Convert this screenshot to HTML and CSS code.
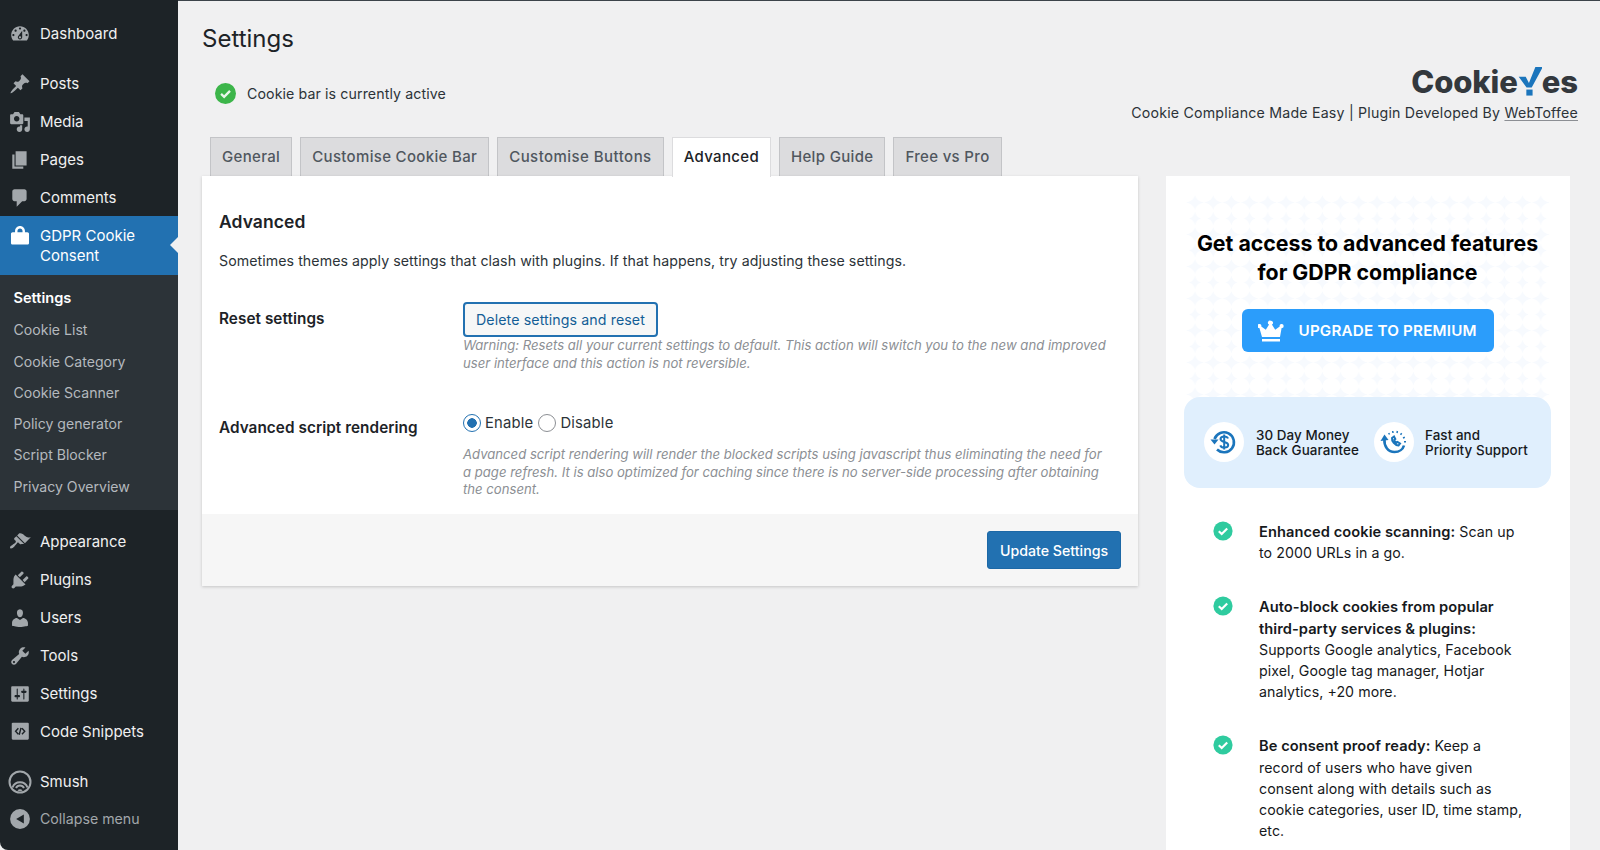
FILE: index.html
```html
<!DOCTYPE html>
<html lang="en">
<head>
<meta charset="utf-8">
<title>Settings</title>
<link rel="stylesheet" href="styles.css">
</head>
<body>
<aside class="sidebar">
  <nav>
    <ul class="menu menu-first">
      <li class="item"><svg class="ico" viewBox="0 0 20 20"><path d="M3.76 16h12.48c1.1-1.37 1.76-3.11 1.76-5 0-4.42-3.58-8-8-8s-8 3.58-8 8c0 1.89.66 3.63 1.76 5zM10 4c.55 0 1 .45 1 1s-.45 1-1 1-1-.45-1-1 .45-1 1-1zM6 6c.55 0 1 .45 1 1s-.45 1-1 1-1-.45-1-1 .45-1 1-1zm8 0c.55 0 1 .45 1 1s-.45 1-1 1-1-.45-1-1 .45-1 1-1zm-5.37 5.55L12 7v6c0 1.1-.9 2-2 2s-2-.9-2-2c0-.57.24-1.08.63-1.45zM4 10c.55 0 1 .45 1 1s-.45 1-1 1-1-.45-1-1 .45-1 1-1zm12 0c.55 0 1 .45 1 1s-.45 1-1 1-1-.45-1-1 .45-1 1-1zm-5 3c0-.55-.45-1-1-1s-1 .45-1 1 .45 1 1 1 1-.45 1-1z" fill-rule="evenodd"/></svg><span>Dashboard</span></li>
    </ul>
    <ul class="menu">
      <li class="item"><svg class="ico" viewBox="0 0 20 20"><path d="M10.44 3.02l1.82-1.82 6.36 6.35-1.83 1.82c-1.05-.68-2.48-.57-3.41.36l-.75.75c-.92.93-1.04 2.35-.35 3.41l-1.83 1.82-2.41-2.41-2.8 2.79c-.42.42-3.38 2.71-3.8 2.29s1.86-3.39 2.28-3.81l2.79-2.79L4.1 9.36l1.83-1.82c1.05.69 2.48.57 3.4-.36l.75-.75c.93-.92 1.05-2.35.36-3.41z"/></svg><span>Posts</span></li>
      <li class="item"><svg class="ico" viewBox="0 0 20 20"><path fill-rule="evenodd" d="M13 11V4c0-.55-.45-1-1-1h-1.67L9 1H5L3.67 3H2c-.55 0-1 .45-1 1v7c0 .55.45 1 1 1h10c.55 0 1-.45 1-1zM7 4.5c1.38 0 2.5 1.12 2.5 2.5S8.38 9.5 7 9.5 4.5 8.38 4.5 7 5.62 4.5 7 4.5zM14 6h5v10.5c0 1.38-1.12 2.5-2.5 2.5S14 17.88 14 16.5s1.12-2.5 2.5-2.5c.17 0 .34.02.5.05V9h-3V6zm-4 8.05V13h2v3.5c0 1.38-1.12 2.5-2.5 2.5S7 17.88 7 16.5 8.12 14 9.5 14c.17 0 .34.02.5.05z"/></svg><span>Media</span></li>
      <li class="item"><svg class="ico" viewBox="0 0 20 20"><path d="M6 15V2h10v13H6zm-1 1h8v2H3V5h2v11z"/></svg><span>Pages</span></li>
      <li class="item"><svg class="ico" viewBox="0 0 20 20"><path d="M5 2h9c1.1 0 2 .9 2 2v7c0 1.1-.9 2-2 2h-2l-5 5v-5H5c-1.1 0-2-.9-2-2V4c0-1.1.9-2 2-2z"/></svg><span>Comments</span></li>
      <li class="item item-current"><svg class="ico" viewBox="0 0 20 20"><path fill-rule="evenodd" d="M5.500 6.500V5.400C5.500 2.900 7.500.9 10 .9s4.500 2 4.500 4.500v1.100h2.200c.8 0 1.500.7 1.500 1.500v8.300c0 .8-.7 1.500-1.500 1.500H3.300c-.8 0-1.500-.7-1.500-1.500V8c0-.8.7-1.500 1.500-1.500zm2.200 0h4.600V5.400c0-1.300-1-2.300-2.300-2.300s-2.300 1-2.300 2.300z"/></svg><span>GDPR Cookie<br>Consent</span></li>
    </ul>
    <ul class="submenu">
      <li class="sub sub-current">Settings</li>
      <li class="sub">Cookie List</li>
      <li class="sub">Cookie Category</li>
      <li class="sub">Cookie Scanner</li>
      <li class="sub">Policy generator</li>
      <li class="sub">Script Blocker</li>
      <li class="sub">Privacy Overview</li>
    </ul>
    <ul class="menu menu-lower">
      <li class="item"><svg class="ico" viewBox="0 0 20 20"><path d="M14.48 11.06L7.41 3.99l1.5-1.5c.5-.56 2.3-.47 3.51.32 1.210.8 1.430 1.280 2.910 2.100 1.180.64 2.450 1.260 4.450.85zm-.71.71L6.700 4.700 4.930 6.470c-.39.39-.39 1.020 0 1.410l1.060 1.060c.39.39.39 1.030 0 1.420-.6.6-1.430 1.110-2.210 1.690-.35.26-.7.53-1.010.84C1.430 13.230.4 14.810 1.200 15.600c.79.79 2.370-.23 3.710-1.570.31-.31.58-.66.85-1.020.57-.78 1.080-1.600 1.690-2.210.39-.39 1.020-.39 1.410 0l1.060 1.060c.39.39 1.020.39 1.410 0z"/></svg><span>Appearance</span></li>
      <li class="item"><svg class="ico" viewBox="0 0 20 20"><path d="M13.11 4.360L9.870 7.600 8 5.730l3.240-3.240c.35-.34 1.050-.2 1.560.32.52.51.66 1.210.31 1.550zm-8 1.770l.91-1.120 9.010 9.010-1.190.84c-.71.71-2.630 1.160-3.820 1.160H6.140L4.900 17.260c-.59.59-1.540.59-2.120 0-.59-.58-.59-1.530 0-2.120l1.240-1.240v-3.880c0-1.130.4-3.190 1.090-3.890zm7.260 3.970l3.240-3.240c.34-.35 1.040-.21 1.550.31.52.51.66 1.210.31 1.550l-3.240 3.250z"/></svg><span>Plugins</span></li>
      <li class="item"><svg class="ico" viewBox="0 0 20 20"><path d="M10 9.250c-2.270 0-2.730-3.440-2.730-3.440C7 4.020 7.820 2 9.970 2c2.160 0 2.980 2.020 2.710 3.810 0 0-.41 3.440-2.680 3.440zm0 2.570L12.720 10c2.390 0 4.520 2.330 4.520 4.530v2.490s-3.650 1.130-7.240 1.130c-3.650 0-7.240-1.130-7.240-1.130v-2.490c0-2.250 1.940-4.480 4.470-4.480z"/></svg><span>Users</span></li>
      <li class="item"><svg class="ico" viewBox="0 0 20 20"><path fill-rule="evenodd" d="M16.680 9.770c-1.340 1.340-3.300 1.670-4.950.99l-5.410 6.520c-.99.99-2.590.99-3.580 0s-.99-2.590 0-3.570l6.520-5.420c-.68-1.650-.35-3.610.99-4.950 1.280-1.280 3.120-1.620 4.720-1.060l-2.890 2.890 2.820 2.820 2.860-2.870c.53 1.580.18 3.390-1.080 4.650zM3.810 16.210c.4.39 1.040.39 1.430 0 .4-.4.4-1.040 0-1.430-.39-.4-1.030-.4-1.430 0-.39.39-.39 1.030 0 1.430z"/></svg><span>Tools</span></li>
      <li class="item"><svg class="ico" viewBox="0 0 20 20"><path fill-rule="evenodd" d="M18 16V4c0-.55-.45-1-1-1H3c-.55 0-1 .45-1 1v12c0 .55.45 1 1 1h14c.55 0 1-.45 1-1zM8 11h1c.55 0 1 .45 1 1s-.45 1-1 1H8v1.500c0 .28-.22.5-.5.5s-.5-.22-.5-.5V13H6c-.55 0-1-.45-1-1s.45-1 1-1h1V5.500c0-.28.22-.5.5-.5s.5.22.5.5V11zm5-2h-1c-.55 0-1-.45-1-1s.45-1 1-1h1V5.500c0-.28.22-.5.5-.5s.5.22.5.5V7h1c.55 0 1 .45 1 1s-.45 1-1 1h-1v5.500c0 .28-.22.5-.5.5s-.5-.22-.5-.5V9z"/></svg><span>Settings</span></li>
      <li class="item"><svg class="ico" viewBox="0 0 20 20"><rect x="2.500" y="1.500" width="15.500" height="15.500" rx="1"/><path class="ico-cut" d="M8.500 6.500 6 9.300l2.500 2.800M9.300 12.500l1.600-6.300M11.800 6.500l2.500 2.800-2.500 2.800"/></svg><span>Code Snippets</span></li>
    </ul>
    <ul class="menu menu-last">
      <li class="item"><svg class="ico ico-smush" viewBox="0 0 24 24"><circle class="ico-ring" cx="12" cy="12" r="10.500"/><path class="ico-ring" d="M4.500 17.500A8 8 0 0 1 19.500 17.500"/><path class="ico-ring" d="M8 18A4.500 4.500 0 0 1 16 18"/><path d="M9.500 20.500a3 3 0 0 1 5 0 6 6 0 0 1-5 0z"/></svg><span>Smush</span></li>
      <li class="item item-collapse"><svg class="ico" viewBox="0 0 20 20"><path fill-rule="evenodd" d="M10 1a9 9 0 1 1 0 18 9 9 0 0 1 0-18zm3.500 4.800L6.500 10l7 4.200z"/></svg><span>Collapse menu</span></li>
    </ul>
  </nav>
</aside>

<main class="main">
  <h1 class="page-title">Settings</h1>
  <div class="top-row">
    <div class="status">
      <svg class="status-ico" viewBox="0 0 20 20"><circle cx="10" cy="10" r="10"/><path d="M5.800 10.400 8.700 13.200 14.300 7.500"/></svg>
      <span>Cookie bar is currently active</span>
    </div>
    <div class="brand">
      <div class="logo"><span>Cookie</span><svg class="logo-y" viewBox="0 0 22 27"><path class="logo-check" d="M0.500 9H7L10 14.800 16 0H23L12.600 19H7.800z"/><rect class="logo-dot" x="7.600" y="21" width="5.800" height="5.600"/></svg><span>es</span></div>
      <p class="tagline">Cookie Compliance Made Easy | Plugin Developed By <a class="tagline-link">WebToffee</a></p>
    </div>
  </div>

  <div class="tabs">
    <a class="tab">General</a>
    <a class="tab">Customise Cookie Bar</a>
    <a class="tab tab-wide">Customise Buttons</a>
    <a class="tab tab-active">Advanced</a>
    <a class="tab">Help Guide</a>
    <a class="tab">Free vs Pro</a>
  </div>

  <div class="columns">
    <section class="panel">
      <div class="panel-body">
        <h2 class="panel-title">Advanced</h2>
        <p class="panel-intro">Sometimes themes apply settings that clash with plugins. If that happens, try adjusting these settings.</p>
        <div class="field field-reset">
          <div class="field-label">Reset settings</div>
          <div class="field-control">
            <button class="btn-outline" type="button">Delete settings and reset</button>
            <p class="hint">Warning: Resets all your current settings to default. This action will switch you to the new and improved user interface and this action is not reversible.</p>
          </div>
        </div>
        <div class="field field-script">
          <div class="field-label field-label-script">Advanced script rendering</div>
          <div class="field-control">
            <div class="radios">
              <label class="radio"><input type="radio" name="script" checked><span>Enable</span></label>
              <label class="radio"><input type="radio" name="script"><span>Disable</span></label>
            </div>
            <p class="hint hint-script">Advanced script rendering will render the blocked scripts using javascript thus eliminating the need for a page refresh. It is also optimized for caching since there is no server-side processing after obtaining the consent.</p>
          </div>
        </div>
      </div>
      <div class="panel-foot"><button class="btn-primary" type="button">Update Settings</button></div>
    </section>

    <aside class="promo">
      <svg class="promo-pattern" aria-hidden="true">
        <defs>
          <pattern id="stars" width="18.200" height="32" patternUnits="userSpaceOnUse">
            <path d="M9 0C10 4 13 6.500 18 7.500 13 8.500 10 11 9 15 8 11 5 8.500 0 7.500 5 6.500 8 4 9 0z"/>
            <path d="M9 16.500C9.800 20 11.500 22.500 15 23.500 11.500 24.500 9.800 27 9 30.500 8.200 27 6.500 24.500 3 23.500 6.500 22.500 8.200 20 9 16.500z"/>
          </pattern>
        </defs>
        <rect width="100%" height="100%" fill="url(#stars)"/>
      </svg>
      <h2 class="promo-title">Get access to advanced features<br>for GDPR compliance</h2>
      <a class="upgrade">
        <svg class="crown" viewBox="0 0 26 24"><path d="M13 1.800a2 2 0 0 1 .9 3.800l3.300 5.200 4.500-3.300a2 2 0 1 1 1.900 1.500L22 18H4L1.400 9a2 2 0 1 1 1.900-1.500l4.500 3.300 3.300-5.200A2 2 0 0 1 13 1.800z"/><rect x="4" y="20" width="18" height="2.500"/></svg>
        <span>UPGRADE TO PREMIUM</span>
      </a>
      <div class="guarantee">
        <div class="guarantee-item">
          <span class="badge"><svg viewBox="0 0 40 40"><path class="badge-line" d="M10.500 17A10 10 0 1 1 13 27.500"/><path class="badge-fill" d="M6.500 17.500h8l-4 5z"/><path class="badge-line badge-thin" d="M24 16.500c-.6-1.500-2-2-3.800-2-2 0-3.700 1-3.700 2.600 0 3.800 7.700 1.900 7.700 5.900 0 1.700-1.700 2.600-3.900 2.600-2 0-3.500-.8-4-2.200M20.200 12.500v15"/></svg></span>
          <span class="guarantee-text">30 Day Money<br>Back Guarantee</span>
        </div>
        <div class="guarantee-item">
          <span class="badge"><svg viewBox="0 0 40 40"><path class="badge-line" d="M10.500 17.500C9.800 24 14 30 20.500 30c5 0 8.500-3 9.500-6.500"/><path class="badge-fill" d="M6.500 19l4-6.500 4 5.500z"/><path class="badge-line badge-thin" d="M18 16c-.5 3 3 7.500 6.500 7.500l1.500-2-2.500-1.500-1 .8c-1-.5-2-1.800-2.200-3l1-.8-1.300-2.500z"/><path class="badge-line badge-dash" d="M15.500 12.500l-.8-1.500M19 11l-.3-2M23 11l.4-2M26.500 12.800l1.200-1.500M29 16l1.800-.8M30 19.800h2"/></svg></span>
          <span class="guarantee-text">Fast and<br>Priority Support</span>
        </div>
      </div>
      <ul class="features">
        <li class="feature"><svg class="feature-ico" viewBox="0 0 20 20"><circle cx="10" cy="10" r="9.600"/><path d="M5.800 10.200 8.700 13 14.200 7.500"/></svg><p><strong>Enhanced cookie scanning:</strong> Scan up to 2000 URLs in a go.</p></li>
        <li class="feature"><svg class="feature-ico" viewBox="0 0 20 20"><circle cx="10" cy="10" r="9.600"/><path d="M5.800 10.200 8.700 13 14.200 7.500"/></svg><p><strong>Auto-block cookies from popular third-party services &amp; plugins:</strong> Supports Google analytics, Facebook pixel, Google tag manager, Hotjar analytics, +20 more.</p></li>
        <li class="feature"><svg class="feature-ico" viewBox="0 0 20 20"><circle cx="10" cy="10" r="9.600"/><path d="M5.800 10.200 8.700 13 14.200 7.500"/></svg><p><strong>Be consent proof ready:</strong> Keep a record of users who have given consent along with details such as cookie categories, user ID, time stamp, etc.</p></li>
      </ul>
    </aside>
  </div>
</main>
</body>
</html>
```

FILE: styles.css
```css
* { box-sizing: border-box; }
html, body { margin: 0; height: 850px; overflow: hidden; }
body {
  display: flex;
  background: #f0f0f1;
  font-family: Inter, "Liberation Sans", sans-serif;
  font-size: 14.2px;
  color: #2c3338;
}
ul { list-style: none; margin: 0; padding: 0; }
p, h1, h2 { margin: 0; }

/* Sidebar */
.sidebar {
  flex: 0 0 178px;
  height: 850px;
  background: #1d2327;
  color: #f0f0f1;
  border-bottom-left-radius: 8px;
}
.menu-first { padding-top: 14px; margin-bottom: 12px; }
.item {
  display: flex;
  align-items: center;
  height: 38px;
  padding: 2px 0 0 9px;
  font-size: 15px;
  line-height: 20px;
}
.ico { flex: 0 0 22px; width: 22px; height: 22px; margin-right: 9px; fill: #a2a7ab; }
.ico-cut { fill: none; stroke: #1d2327; stroke-width: 1.300; }
.ico-ring { fill: none; stroke: #a2a7ab; stroke-width: 2; }
.ico-smush { width: 24px; height: 24px; flex-basis: 24px; margin-left: -1px; margin-right: 8px; }
.item-current {
  height: 59px;
  background: #2271b1;
  color: #fff;
  position: relative;
  align-items: flex-start;
  padding-top: 10px;
}
.item-current .ico { fill: #fff; margin-top: -1px; }
.item-current::after {
  content: "";
  position: absolute;
  right: 0;
  top: 21px;
  border: 8px solid transparent;
  border-right-color: #f0f0f1;
  border-left-width: 0;
}
.submenu { background: #2c3338; padding: 8px 0 7px; height: 235px; }
.sub { height: 31.300px; line-height: 31.300px; padding-left: 13.500px; font-size: 14.100px; color: #b4b9be; }
.sub-current { color: #fff; font-weight: 600; font-size: 14.600px; }
.menu-lower { margin-top: 12px; margin-bottom: 12px; }
.menu-last .item + .item { margin-top: -1px; }
.item-collapse { color: #a2a7ab; font-size: 14.200px; }

/* Main */
.main { flex: 1; min-width: 0; padding: 0 22px 0 24px; border-top: 1px solid #3c434a; }
.page-title { font-size: 24px; font-weight: 400; line-height: 32px; padding-top: 22px; color: #1d2327; }
.top-row { display: flex; justify-content: space-between; align-items: flex-start; height: 82px; }
.status { display: flex; align-items: center; gap: 11px; padding: 28px 0 0 13px; }
.status span { letter-spacing: .1px; }
.status-ico { width: 21px; height: 21px; }
.status-ico circle { fill: #3cb54a; }
.status-ico path { fill: none; stroke: #eaf7ec; stroke-width: 2.200; }
.brand { text-align: right; }
.logo {
  display: flex;
  justify-content: flex-end;
  align-items: flex-end;
  height: 30px;
  margin-top: 12px;
  font-size: 31px;
  font-weight: 800;
  line-height: 30px;
  color: #33383d;
  letter-spacing: -.1px;
}
.logo-y { width: 24px; height: 29px; margin: 0 0 1px 0; }
.logo-check, .logo-dot { fill: #1b75bc; }
.tagline { font-size: 14.200px; line-height: 20px; margin-top: 6px; letter-spacing: .2px; }
.tagline-link { text-decoration: underline; text-underline-offset: 2px; text-decoration-color: #8c8f94; }

/* Tabs */
.tabs { display: flex; gap: 8px; padding-left: 8px; height: 39px; }
.tab {
  display: flex;
  align-items: center;
  padding: 0 11px 2px;
  height: 40px;
  background: #dcdcde;
  border: 1px solid #c3c4c7;
  border-bottom: 0;
  color: #50575e;
  font-size: 15px;
  font-weight: 500;
  letter-spacing: .33px;
}
.tab-wide { letter-spacing: .45px; }
.tab-active { background: #fff; border-color: #dcdcde; color: #1d2327; position: relative; z-index: 1; }

/* Columns */
.columns { display: flex; gap: 28px; align-items: flex-start; }
.panel {
  position: relative;
  flex: 0 0 936px;
  background: #fff;
  box-shadow: 0 1px 3px rgba(0, 0, 0, .18);
  letter-spacing: .06px;
}
.panel-body { height: 338px; padding: 35px 17px 0; }
.panel-title { font-size: 17.500px; font-weight: 600; line-height: 22px; color: #1d2327; }
.panel-intro { margin-top: 17px; line-height: 22px; }
.field { display: flex; }
.field-reset { margin-top: 30px; }
.field-script { margin-top: 38px; }
.field-label { flex: 0 0 244px; font-weight: 600; font-size: 15.300px; line-height: 20px; padding-top: 7px; color: #1d2327; }
.field-label-script { padding-top: 8px; }
.field-control { flex: 1; }
.btn-outline {
  display: block;
  width: 195px;
  height: 35px;
  padding: 0;
  background: #f6f7f7;
  border: 2px solid #2271b1;
  border-radius: 4px;
  font: inherit;
  letter-spacing: .1px;
  color: #135e96;
}
.hint { font-style: italic; font-size: 13.130px; line-height: 17.500px; color: #8c8f94; width: 650px; letter-spacing: 0; }
.hint-script { margin-top: 12px; }
.radios { display: flex; align-items: center; gap: 5px; height: 22px; margin-top: 2px; }
.radio { display: flex; align-items: center; gap: 4px; font-size: 14.800px; letter-spacing: .2px; }
.radio input {
  appearance: none;
  width: 18px;
  height: 18px;
  margin: 0;
  background: #fff;
  border: 1px solid #8c8f94;
  border-radius: 50%;
}
.radio input:checked { border-color: #2271b1; background: radial-gradient(circle, #2271b1 0 4.500px, #fff 5px); }
.panel-foot {
  display: flex;
  justify-content: flex-end;
  align-items: flex-start;
  height: 72px;
  padding: 17px 17px 0 0;
  background: #f6f6f6;
}
.btn-primary {
  width: 134px;
  height: 38px;
  padding: 0;
  background: #2271b1;
  border: 1px solid #1c68a6;
  border-radius: 3px;
  color: #fff;
  font: inherit;
  font-weight: 500;
}

/* Promo */
.promo {
  position: relative;
  flex: 0 0 404px;
  height: 700px;
  padding: 53px 19px 0 18px;
  background: #fff;
  color: #16191c;
}
.promo > * { position: relative; }
.promo > .promo-pattern { position: absolute; left: 20px; top: 19px; width: 364px; height: 215px; fill: #f7fafe; }
.promo-title { font-size: 21.300px; line-height: 29px; font-weight: 700; text-align: center; color: #000; white-space: nowrap; }
.upgrade {
  display: flex;
  align-items: center;
  width: 252px;
  height: 43px;
  margin: 22px auto 0;
  padding-left: 16px;
  background: #2b9dfb;
  border-radius: 6px;
  color: #fff;
  font-weight: 600;
  font-size: 15.200px;
  letter-spacing: .2px;
}
.crown { width: 26px; height: 24px; margin-right: 15px; fill: #fff; }
.guarantee {
  display: flex;
  gap: 14px;
  height: 91px;
  margin-top: 45px;
  padding: 25px 0 0 20px;
  background: #e0effd;
  border-radius: 16px;
}
.guarantee-item { display: flex; gap: 11px; font-size: 13.400px; line-height: 14.500px; font-weight: 500; letter-spacing: .08px; }
.guarantee-item:first-child { width: 156px; }
.guarantee-text { padding: 6px 0 0 1px; white-space: nowrap; }
.guarantee-item + .guarantee-item .guarantee-text { padding-left: 0; }
.badge { width: 40px; height: 40px; background: #fff; border-radius: 50%; flex: none; }
.badge svg { display: block; width: 40px; height: 40px; }
.badge-line { fill: none; stroke: #1b75bc; stroke-width: 2.600; }
.badge-thin { stroke-width: 2; }
.badge-dash { stroke-width: 1.500; }
.badge-fill { fill: #1b75bc; }
.features { margin-top: 33px; padding-left: 29px; width: 344px; }
.feature { display: flex; gap: 26px; font-size: 14.200px; line-height: 21.200px; margin-bottom: 33px; letter-spacing: .06px; }
.feature p { flex: 0 0 264px; }
.feature strong { font-weight: 600; font-size: 14.650px; line-height: 1; }
.feature-ico { flex: 0 0 20px; width: 20px; height: 20px; }
.feature-ico circle { fill: #2fcb9f; }
.feature-ico path { fill: none; stroke: #fff; stroke-width: 2.200; }
```
